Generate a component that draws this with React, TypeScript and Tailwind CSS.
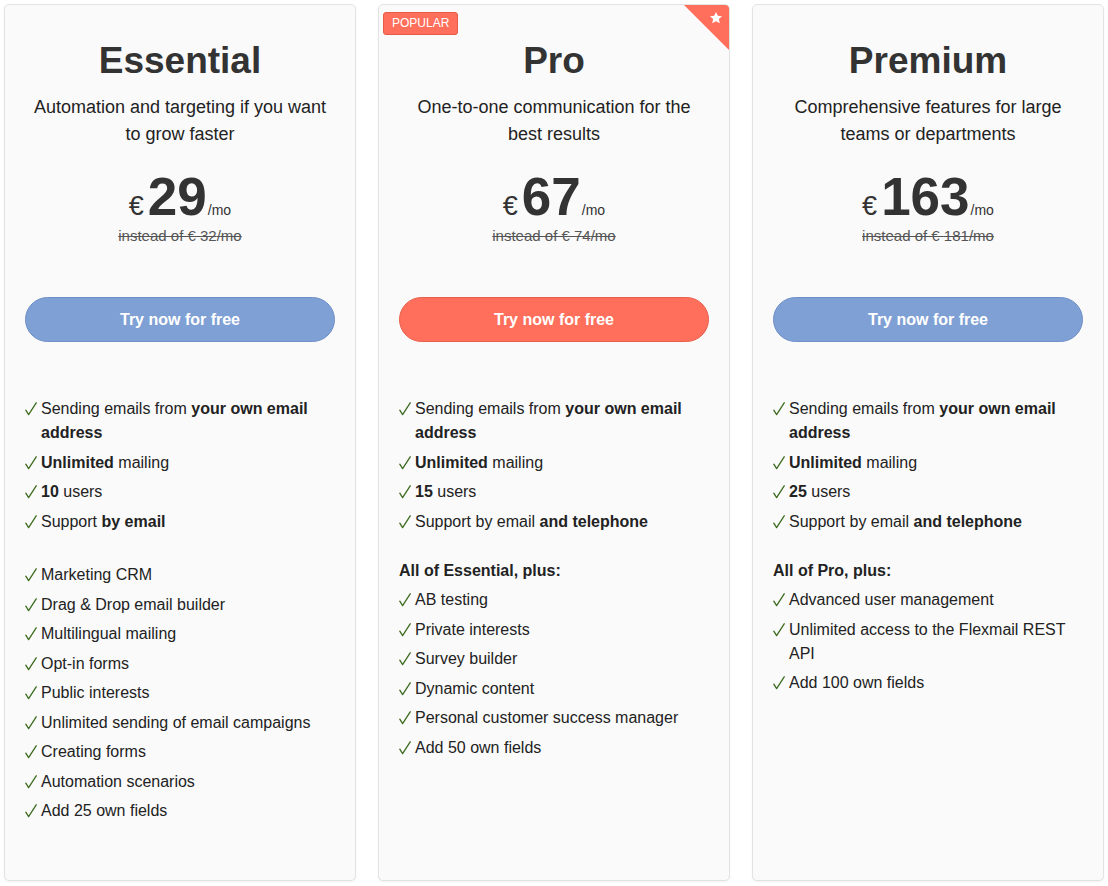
import React from "react";

type Feature = React.ReactNode;

interface Plan {
  name: string;
  desc: string;
  price: string;
  old: string;
  popular?: boolean;
  base: Feature[];
  extraTitle?: string;
  extra: Feature[];
}

const PLANS: Plan[] = [
  {
    name: "Essential",
    desc: "Automation and targeting if you want to grow faster",
    price: "29",
    old: "32",
    base: [
      <>Sending emails from <b>your own email address</b></>,
      <><b>Unlimited</b> mailing</>,
      <><b>10</b> users</>,
      <>Support <b>by email</b></>,
    ],
    extra: [
      "Marketing CRM",
      "Drag & Drop email builder",
      "Multilingual mailing",
      "Opt-in forms",
      "Public interests",
      "Unlimited sending of email campaigns",
      "Creating forms",
      "Automation scenarios",
      "Add 25 own fields",
    ],
  },
  {
    name: "Pro",
    desc: "One-to-one communication for the best results",
    price: "67",
    old: "74",
    popular: true,
    base: [
      <>Sending emails from <b>your own email address</b></>,
      <><b>Unlimited</b> mailing</>,
      <><b>15</b> users</>,
      <>Support by email <b>and telephone</b></>,
    ],
    extraTitle: "All of Essential, plus:",
    extra: [
      "AB testing",
      "Private interests",
      "Survey builder",
      "Dynamic content",
      "Personal customer success manager",
      "Add 50 own fields",
    ],
  },
  {
    name: "Premium",
    desc: "Comprehensive features for large teams or departments",
    price: "163",
    old: "181",
    base: [
      <>Sending emails from <b>your own email address</b></>,
      <><b>Unlimited</b> mailing</>,
      <><b>25</b> users</>,
      <>Support by email <b>and telephone</b></>,
    ],
    extraTitle: "All of Pro, plus:",
    extra: [
      "Advanced user management",
      "Unlimited access to the Flexmail REST API",
      "Add 100 own fields",
    ],
  },
];

function Check() {
  return (
    <svg viewBox="0 0 12 14" className="mt-[5px] h-[14px] w-[12px] shrink-0" fill="none">
      <path d="M0.8 8.2 L3.6 12.6 L11.2 0.8" stroke="#3d6b1f" strokeWidth="1.3" strokeLinecap="round" strokeLinejoin="round" />
    </svg>
  );
}

function Item({ children }: { children: Feature }) {
  return (
    <li className="mb-[5.5px] flex gap-[4px] leading-6">
      <Check />
      <span>{children}</span>
    </li>
  );
}

function Card({ plan }: { plan: Plan }) {
  return (
    <div className="relative flex-1 overflow-hidden rounded-[5px] border border-[#e3e3e3] bg-[#fafafa] px-[20px] pt-[34px] shadow-[0_1px_2px_rgba(0,0,0,0.06)]">
      {plan.popular && (
        <>
          <span className="absolute left-[4px] top-[7px] rounded-[3px] border border-[#e85a48] bg-[#ff6f5b] px-[8px] py-[3px] text-[12px] leading-[15px] text-white">
            POPULAR
          </span>
          <div className="absolute right-0 top-0 h-[45px] w-[45px] bg-[#ff6f5b] [clip-path:polygon(0_0,100%_0,100%_100%)]">
            <svg viewBox="0 0 24 24" className="absolute right-[6px] top-[6px] h-[14px] w-[14px] fill-white">
              <path d="M12 1.5l3.1 6.6 7.2.9-5.3 4.9 1.4 7.1L12 17.5 5.6 21l1.4-7.1L1.7 9l7.2-.9z" />
            </svg>
          </div>
        </>
      )}
      <h2 className="text-center text-[37px] font-bold leading-[44px] text-[#333]">{plan.name}</h2>
      <p className="mx-auto mt-[11px] max-w-[306px] text-center text-[18px] leading-[27px] text-[#222]">{plan.desc}</p>
      <div className="mt-[19px] flex items-baseline justify-center text-[#333]">
        <span className="mr-[4px] text-[27px]">€</span>
        <span className="text-[53px] font-bold leading-[60px]">{plan.price}</span>
        <span className="ml-[1px] text-[14px]">/mo</span>
      </div>
      <p className="text-center text-[15px] leading-[18px] text-[#555] line-through">instead of € {plan.old}/mo</p>
      <button
        className={
          plan.popular
            ? "mt-[52px] h-[45px] w-full rounded-full border border-[#e8604c] bg-[#ff6f5b] text-[16px] font-bold text-white"
            : "mt-[52px] h-[45px] w-full rounded-full border border-[#6e90c9] bg-[#7fa0d4] text-[16px] font-bold text-white"
        }
      >
        Try now for free
      </button>
      <ul className="mt-[55px] text-[16px] text-[#222]">
        {plan.base.map((f, i) => (
          <Item key={i}>{f}</Item>
        ))}
      </ul>
      {plan.extraTitle ? (
        <p className="mb-[5.5px] mt-[25px] text-[16px] font-bold leading-6 text-[#222]">{plan.extraTitle}</p>
      ) : (
        <div className="h-[24px]" />
      )}
      <ul className="text-[16px] text-[#222]">
        {plan.extra.map((f, i) => (
          <Item key={i}>{f}</Item>
        ))}
      </ul>
    </div>
  );
}

export default function App() {
  return (
    <div className="h-[886px] bg-white p-[4px] pb-[5px] font-['Liberation_Sans',Arial,sans-serif]">
      <div className="flex h-full gap-[22px]">
        {PLANS.map((p) => (
          <Card key={p.name} plan={p} />
        ))}
      </div>
    </div>
  );
}
